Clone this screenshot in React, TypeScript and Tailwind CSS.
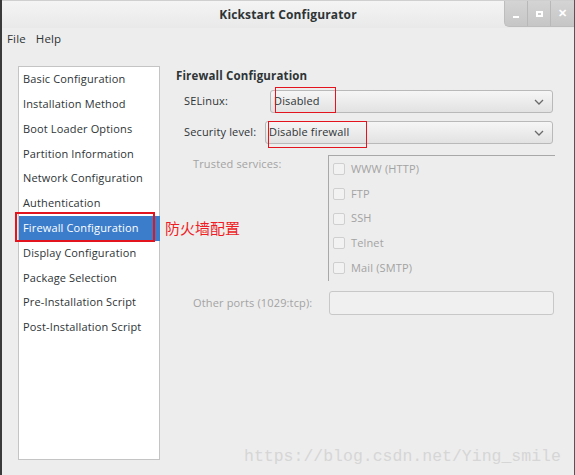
import React from "react";

const items = [
  "Basic Configuration",
  "Installation Method",
  "Boot Loader Options",
  "Partition Information",
  "Network Configuration",
  "Authentication",
  "Firewall Configuration",
  "Display Configuration",
  "Package Selection",
  "Pre-Installation Script",
  "Post-Installation Script",
];

const services = ["WWW (HTTP)", "FTP", "SSH", "Telnet", "Mail (SMTP)"];

function Chevron() {
  return (
    <svg width="10" height="6" viewBox="0 0 10 6" className="shrink-0">
      <path d="M1 1 L5 5 L9 1" fill="none" stroke="#6a6a6a" strokeWidth="1.3" />
    </svg>
  );
}

function Combo({ text, width }: { text: string; width: string }) {
  return (
    <div
      className={`${width} h-[23px] flex items-center justify-between pl-[3px] pr-[8px] rounded-[3px] border border-[#b9b9b9] bg-gradient-to-b from-[#f6f6f6] to-[#e2e2e2] text-[#2e3436]`}
    >
      <span>{text}</span>
      <Chevron />
    </div>
  );
}

export default function App() {
  return (
    <div
      className="relative w-[575px] h-[475px] bg-[#ededed] border-l-2 border-l-[#3a3a3a] border-r border-r-[#555] flex flex-col overflow-hidden text-[11px] text-[#2e3436] tracking-[0.15px]"
      style={{ fontFamily: "'Open Sans', 'Noto Sans', sans-serif" }}
    >
      {/* Title bar */}
      <div className="h-[28px] shrink-0 relative flex items-center justify-center bg-gradient-to-b from-[#f4f4f4] to-[#e9e9e9] border-t border-t-[#cfcfcf]">
        <span className="font-bold text-[12px] text-[#2e3436]">Kickstart Configurator</span>
        <div className="absolute right-0 top-0 h-[26px] flex rounded-bl-[5px] overflow-hidden bg-gradient-to-b from-[#d4d4d4] to-[#c6c6c6] border-l border-b border-[#bdbdbd]">
          <div className="w-[23px] flex items-end justify-center pb-[8px] border-r border-[#b8b8b8]">
            <div className="w-[6px] h-[2px] bg-white" />
          </div>
          <div className="w-[23px] flex items-center justify-center border-r border-[#b8b8b8]">
            <div className="w-[7px] h-[6px] border-2 border-white" />
          </div>
          <div className="w-[23px] flex items-center justify-center text-white font-bold text-[11px]">
            ✕
          </div>
        </div>
      </div>

      {/* Menu bar */}
      <div className="h-[22px] shrink-0 flex items-center gap-[10px] px-[5px] text-[11.5px]">
        <span>File</span>
        <span>Help</span>
      </div>

      {/* Content */}
      <div className="flex pt-[16px] pl-[16px]">
        {/* Left list */}
        <div className="relative w-[142px] h-[394px] bg-white border border-[#c4c4c4] shrink-0">
          {items.map((it) => {
            const sel = it === "Firewall Configuration";
            return (
              <div
                key={it}
                className={`h-[24.8px] flex items-center pl-[4px] whitespace-nowrap ${
                  sel ? "bg-[#3b7dcb] text-white -mr-[1px]" : "text-[#2e3436]"
                }`}
              >
                {it}
              </div>
            );
          })}
          <div className="absolute left-[-4px] top-[145px] w-[140px] h-[30px] border-2 border-[#e3141e]" />
          <div
            className="absolute left-[146px] top-[150px] text-[15px] text-[#ee1c25] whitespace-nowrap tracking-normal"
            style={{ fontFamily: "'Noto Sans CJK SC', sans-serif" }}
          >
            防火墙配置
          </div>
        </div>

        {/* Right panel */}
        <div className="flex flex-col pl-[16px] w-[400px]">
          <div className="font-bold text-[11.5px] text-[#2e3436] mt-[2px] h-[16px] leading-[16px]">Firewall Configuration</div>
          <div className="pl-[8px] mt-[6px] flex flex-col gap-[8px]">
            <div className="flex items-center relative">
              <span className="w-[86px]">SELinux:</span>
              <Combo text="Disabled" width="w-[283px]" />
              <div className="absolute left-[91px] top-[-3px] w-[61px] h-[26px] border border-[#e3141e]" />
            </div>
            <div className="flex items-center relative">
              <span className="w-[81px]">Security level:</span>
              <Combo text="Disable firewall" width="w-[288px]" />
              <div className="absolute left-[84px] top-[0px] w-[99px] h-[27px] border border-[#e3141e]" />
            </div>
          </div>

          <div className="flex mt-[11px] pl-[17px] text-[#a3a3a3]">
            <span className="w-[135px] mt-[1px]">Trusted services:</span>
            <div className="w-[227px] h-[126px] border-l border-t border-[#a8a8a8] pl-[4px] pt-[1px]">
              {services.map((s) => (
                <div key={s} className="h-[24.7px] flex items-center gap-[6px]">
                  <div className="w-[12px] h-[12px] rounded-[2px] border border-[#cfcfcf] bg-[#f2f2f2]" />
                  <span>{s}</span>
                </div>
              ))}
            </div>
          </div>

          <div className="flex items-center mt-[10px] pl-[17px] text-[#a3a3a3]">
            <span className="w-[136px]">Other ports (1029:tcp):</span>
            <div className="w-[225px] h-[24px] rounded-[3px] border border-[#c8c8c8] bg-[#f0f0f0]" />
          </div>
        </div>
      </div>

      {/* watermark */}
      <div
        className="absolute left-[242px] top-[445px] text-[16.5px] text-[#d6d6d6] tracking-normal whitespace-nowrap"
        style={{ fontFamily: "'Liberation Mono', monospace" }}
      >
        https://blog.csdn.net/Ying_smile
      </div>
    </div>
  );
}
